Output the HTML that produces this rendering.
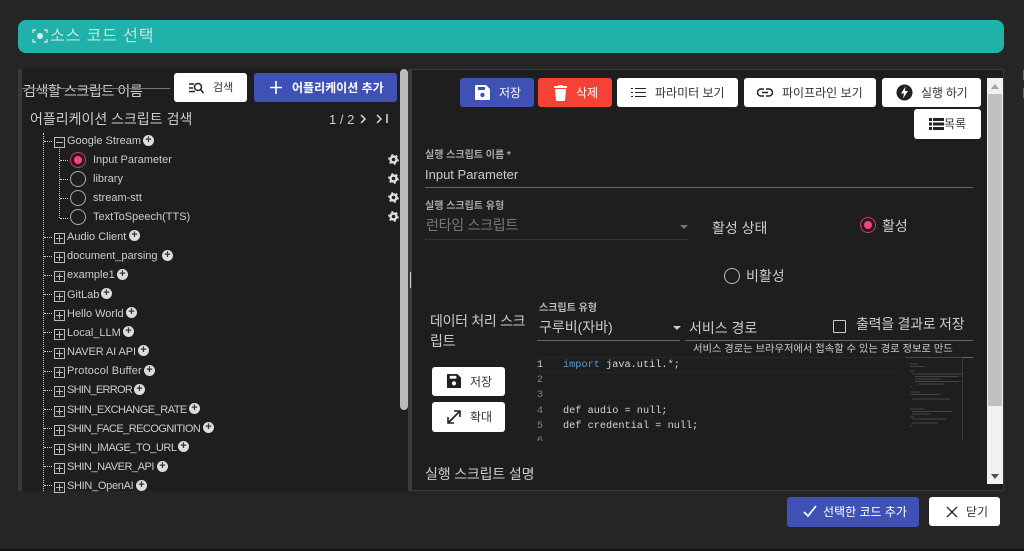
<!DOCTYPE html>
<html lang="ko"><head><meta charset="utf-8"><style>
html,body{margin:0;padding:0;width:1024px;height:551px;overflow:hidden;background:#252525}
body{font-family:"Liberation Sans","Noto Sans CJK KR",sans-serif;color:#ddd;position:relative}
.a{position:absolute;white-space:nowrap}
.btn{position:absolute;border-radius:3px;background:#fff;color:#333;font-size:12px;height:29px;line-height:30px;box-sizing:border-box;white-space:nowrap}
.btn svg{position:absolute}
.btn span{position:absolute;top:0}
.blue{background:#3f51b5;color:#fff}
.red{background:#f44336;color:#fff}
.t{position:absolute;font-size:11px;color:#ccc;line-height:14px;white-space:nowrap;margin-top:1px}
.s{letter-spacing:-.45px}
.box{position:absolute;left:54px;width:9px;height:9px;border:1px solid #bbb;margin-top:1px}
.box:before{content:"";position:absolute;left:1px;top:4px;width:7px;height:1px;background:#bbb}
.box.p:after{content:"";position:absolute;left:4px;top:1px;width:1px;height:7px;background:#bbb}
.d{position:absolute;left:44px;width:8px;border-top:1px dotted #ccc}
.c{position:absolute;width:11px;height:11px;border-radius:50%;background:#ddd;color:#334;font-size:11px;line-height:10px;text-align:center;font-weight:bold}
.r{position:absolute;left:70px;width:14px;height:14px;border:1px solid #aaa;border-radius:50%}
.g{position:absolute;left:388px}
.m{font-family:"Liberation Mono","DejaVu Sans Mono",monospace;font-size:10.25px;position:absolute;white-space:pre;color:#d4d4d4;line-height:14px}
.n{font-family:"Liberation Mono",monospace;font-size:10.25px;position:absolute;left:517px;width:26px;text-align:right;color:#858585;line-height:14px}
</style></head><body>
<div class="a" style="left:0;top:549px;width:1024px;height:2px;background:#141414"></div>
<div class="a" style="left:1023px;top:70px;width:1px;height:10px;background:#666"></div>
<div class="a" style="left:1023px;top:88px;width:1px;height:10px;background:#666"></div>
<div class="a" style="left:18px;top:20px;width:986px;height:33px;background:#20b2aa;border-radius:8px"></div>
<svg class="a" style="left:32px;top:28px" width="16" height="16" viewBox="0 0 16 16" fill="none" stroke="#cdd" stroke-width="1.4"><path d="M1 5V2h3M12 2h3v3M15 11v3h-3M4 14H1v-3"/><circle cx="8" cy="8" r="3" fill="#dee" stroke="none"/></svg>
<div class="a" style="left:50px;top:27px;font-size:16px;line-height:20px;color:#c4e2df;letter-spacing:.9px">소스 코드 선택</div>

<div class="a" style="left:18px;top:69px;width:392px;height:422px;background:#1e1e1e"></div>
<div class="a" style="left:18px;top:69px;width:4px;height:422px;background:#3a3a3a"></div>
<div class="a" style="left:408px;top:69px;width:4px;height:422px;background:#3a3a3a"></div>
<div class="a" style="left:400px;top:69px;width:8px;height:341px;background:#bbb;border-radius:4px"></div>
<div class="a" style="left:410px;top:272px;width:4px;height:16px;border-left:1px solid #ccc;border-right:1px solid #ccc;box-sizing:border-box"></div>

<div class="a" style="left:23px;top:82px;font-size:14px;line-height:18px;color:#ccc;letter-spacing:-.4px">검색할 스크립트 이름</div>
<div class="a" style="left:22px;top:88px;width:148px;height:1px;background:#777"></div>
<div class="btn" style="left:174px;top:73px;width:73px"><svg style="left:14px;top:7px" width="17" height="15" viewBox="0 0 17 15" fill="none" stroke="#222" stroke-width="1.5"><path d="M1 4h5M1 8h4M1 11.500h6"/><circle cx="10" cy="7" r="3.500"/><path d="M12.500 9.500L15.500 13"/></svg><span style="left:39px;font-size:11px">검색</span></div>
<div class="btn blue" style="left:254px;top:73px;width:143px"><svg style="left:16px;top:8px" width="12" height="13" viewBox="0 0 12 13" stroke="#fff" stroke-width="1.600"><path d="M6 0v13M0 6.500h12"/></svg><span style="left:38px;font-weight:bold">어플리케이션 추가</span></div>
<div class="a" style="left:30px;top:110px;font-size:14px;line-height:18px;color:#ccc">어플리케이션 스크립트 검색</div>
<div class="a" style="left:329px;top:111px;font-size:13px;line-height:18px;color:#ccc">1 / 2</div>
<svg class="a" style="left:358px;top:112px" width="32" height="14" viewBox="0 0 32 14" fill="none" stroke="#ddd" stroke-width="1.500"><path d="M3 3l4 4-4 4M19 3l4 4-4 4M29 2v9"/></svg>

<div class="a" style="left:43px;top:133px;height:358px;border-left:1px dotted #ccc"></div>
<div class="a" style="left:59px;top:147px;height:71px;border-left:1px dotted #ccc"></div>

<div class="d" style="top:141px"></div><div class="box" style="top:136px"></div><div class="t" style="left:67px;top:133px">Google Stream</div><div class="c" style="left:143px;top:135px">+</div>

<div class="d" style="left:60px;top:160px"></div>
<div class="a" style="left:70px;top:152px;width:14px;height:14px;border:1px solid #e03070;border-radius:50%"><div class="a" style="left:3px;top:3px;width:8px;height:8px;border-radius:50%;background:#ff4081"></div></div><div class="t" style="left:93px;top:152px">Input Parameter</div>
<div class="d" style="left:60px;top:179px"></div><div class="r" style="top:171px"></div><div class="t" style="left:93px;top:171px">library</div>
<div class="d" style="left:60px;top:198px"></div><div class="r" style="top:190px"></div><div class="t" style="left:93px;top:190px">stream-stt</div>
<div class="d" style="left:60px;top:218px"></div><div class="r" style="top:209px"></div><div class="t" style="left:93px;top:209px">TextToSpeech(TTS)</div>
<svg class="g" style="top:154px" width="11" height="11" viewBox="0 0 11 11" fill="none" stroke="#ddd"><circle cx="5.500" cy="5.500" r="3" stroke-width="2.400"/><circle cx="5.500" cy="5.500" r="4.700" stroke-width="1.400" stroke-dasharray="2 2.900"/></svg>
<svg class="g" style="top:173px" width="11" height="11" viewBox="0 0 11 11" fill="none" stroke="#ddd"><circle cx="5.500" cy="5.500" r="3" stroke-width="2.400"/><circle cx="5.500" cy="5.500" r="4.700" stroke-width="1.400" stroke-dasharray="2 2.900"/></svg>
<svg class="g" style="top:192px" width="11" height="11" viewBox="0 0 11 11" fill="none" stroke="#ddd"><circle cx="5.500" cy="5.500" r="3" stroke-width="2.400"/><circle cx="5.500" cy="5.500" r="4.700" stroke-width="1.400" stroke-dasharray="2 2.900"/></svg>
<svg class="g" style="top:211px" width="11" height="11" viewBox="0 0 11 11" fill="none" stroke="#ddd"><circle cx="5.500" cy="5.500" r="3" stroke-width="2.400"/><circle cx="5.500" cy="5.500" r="4.700" stroke-width="1.400" stroke-dasharray="2 2.900"/></svg>

<div class="d" style="top:237px"></div><div class="box p" style="top:232px"></div><div class="t" style="left:67px;top:229px">Audio Client</div><div class="c" style="left:129px;top:230px">+</div>
<div class="d" style="top:256px"></div><div class="box p" style="top:251px"></div><div class="t" style="left:67px;top:248px">document_parsing</div><div class="c" style="left:162px;top:250px">+</div>
<div class="d" style="top:275px"></div><div class="box p" style="top:270px"></div><div class="t" style="left:67px;top:267px">example1</div><div class="c" style="left:117px;top:269px">+</div>
<div class="d" style="top:294px"></div><div class="box p" style="top:290px"></div><div class="t" style="left:67px;top:287px">GitLab</div><div class="c" style="left:101px;top:288px">+</div>
<div class="d" style="top:313px"></div><div class="box p" style="top:309px"></div><div class="t" style="left:67px;top:306px">Hello World</div><div class="c" style="left:126px;top:307px">+</div>
<div class="d" style="top:332px"></div><div class="box p" style="top:328px"></div><div class="t" style="left:67px;top:325px">Local_LLM</div><div class="c" style="left:123px;top:326px">+</div>
<div class="d" style="top:351px"></div><div class="box p" style="top:347px"></div><div class="t" style="left:67px;top:344px;letter-spacing:-.1px">NAVER AI API</div><div class="c" style="left:138px;top:345px">+</div>
<div class="d" style="top:371px"></div><div class="box p" style="top:366px"></div><div class="t" style="left:67px;top:363px;letter-spacing:.15px">Protocol Buffer</div><div class="c" style="left:144px;top:365px">+</div>
<div class="d" style="top:390px"></div><div class="box p" style="top:385px"></div><div class="t s" style="left:67px;top:382px;letter-spacing:-.7px">SHIN_ERROR</div><div class="c" style="left:134px;top:384px">+</div>
<div class="d" style="top:409px"></div><div class="box p" style="top:405px"></div><div class="t s" style="left:67px;top:402px;letter-spacing:-.5px">SHIN_EXCHANGE_RATE</div><div class="c" style="left:189px;top:403px">+</div>
<div class="d" style="top:428px"></div><div class="box p" style="top:424px"></div><div class="t s" style="left:67px;top:421px;letter-spacing:-.55px">SHIN_FACE_RECOGNITION</div><div class="c" style="left:203px;top:422px">+</div>
<div class="d" style="top:447px"></div><div class="box p" style="top:443px"></div><div class="t s" style="left:67px;top:440px">SHIN_IMAGE_TO_URL</div><div class="c" style="left:178px;top:441px">+</div>
<div class="d" style="top:466px"></div><div class="box p" style="top:462px"></div><div class="t s" style="left:67px;top:459px">SHIN_NAVER_API</div><div class="c" style="left:157px;top:461px">+</div>
<div class="d" style="top:485px"></div><div class="box p" style="top:481px"></div><div class="t" style="left:67px;top:478px;letter-spacing:-.3px">SHIN_OpenAI</div><div class="c" style="left:136px;top:480px">+</div>

<div class="a" style="left:412px;top:69px;width:592px;height:422px;background:#1e1e1e;border:1px solid #3a3a3a;border-left:0;box-sizing:border-box"></div>
<div class="a" style="left:987px;top:78px;width:16px;height:406px;background:#f1f1f1"></div>
<div class="a" style="left:988px;top:94px;width:14px;height:312px;background:#c1c1c1"></div>
<div class="a" style="left:991px;top:84px;border:4px solid transparent;border-bottom:5px solid #a3a3a3;border-top:0"></div>
<div class="a" style="left:991px;top:474px;border:4px solid transparent;border-top:5px solid #505050;border-bottom:0"></div>

<div class="btn blue" style="left:460px;top:78px;width:74px"><svg style="left:14px;top:6px" width="17" height="17" viewBox="0 0 17 17"><path d="M2 1h10l4 4v10a1 1 0 0 1-1 1H2a1 1 0 0 1-1-1V2a1 1 0 0 1 1-1z" fill="#fff"/><rect x="4" y="3" width="7" height="3" fill="#3f51b5"/><circle cx="8.500" cy="11" r="2.200" fill="#3f51b5"/></svg><span style="left:39px">저장</span></div>
<div class="btn red" style="left:538px;top:78px;width:74px"><svg style="left:14px;top:6px" width="17" height="17" viewBox="0 0 17 17" fill="#fff"><path d="M3 5h11l-1 11a1 1 0 0 1-1 1H5a1 1 0 0 1-1-1zM2 2h4l1-1h3l1 1h4v2H2z"/></svg><span style="left:38px">삭제</span></div>
<div class="btn" style="left:617px;top:78px;width:121px"><svg style="left:14px;top:9px" width="15" height="11" viewBox="0 0 15 11" stroke="#222" stroke-width="1.100"><path d="M0 1.500h2M4 1.500h11M0 5.500h2M4 5.500h11M0 9.500h2M4 9.500h11"/></svg><span style="left:38px">파라미터 보기</span></div>
<div class="btn" style="left:744px;top:78px;width:132px"><svg style="left:13px;top:9px" width="16" height="11" viewBox="0 0 16 11" fill="none" stroke="#222" stroke-width="1.500"><path d="M7 2H4a3.500 3.500 0 0 0 0 7h3M9 2h3a3.500 3.500 0 0 1 0 7H9M5 5.500h6"/></svg><span style="left:38px">파이프라인 보기</span></div>
<div class="btn" style="left:882px;top:78px;width:99px"><svg style="left:13px;top:5px" width="19" height="19" viewBox="0 0 19 19"><circle cx="9.500" cy="9.500" r="8" fill="#222"/><path d="M10.500 3.500L6 10.500h3l-1 5 5-7.500h-3z" fill="#fff"/></svg><span style="left:39px;letter-spacing:-.2px">실행 하기</span></div>
<div class="btn" style="left:914px;top:109px;width:67px;height:30px;line-height:30px"><svg style="left:15px;top:9px" width="15" height="12" viewBox="0 0 15 12" fill="#222"><path d="M0 0h3v3H0zM4 0h11v3H4zM0 4.500h3v3H0zM4 4.500h11v3H4zM0 9h3v3H0zM4 9h11v3H4z"/></svg><span style="left:30px">목록</span></div>

<div class="a" style="left:425px;top:149px;font-size:10px;line-height:13px;color:#aaa;font-weight:bold">실행 스크립트 이름 *</div>
<div class="a" style="left:425px;top:166px;font-size:13px;line-height:17px;color:#ccc">Input Parameter</div>
<div class="a" style="left:425px;top:187px;width:548px;height:1px;background:#666"></div>

<div class="a" style="left:425px;top:200px;font-size:10px;line-height:13px;color:#aaa;font-weight:bold">실행 스크립트 유형</div>
<div class="a" style="left:426px;top:216px;font-size:14px;line-height:18px;color:#777;letter-spacing:-.25px">런타임 스크립트</div>
<div class="a" style="left:680px;top:225px;border:4px solid transparent;border-top:4px solid #777;border-bottom:0"></div>
<div class="a" style="left:425px;top:239px;width:262px;border-top:1px dotted #444"></div>
<div class="a" style="left:712px;top:219px;font-size:14px;line-height:18px;color:#ccc">활성 상태</div>
<div class="a" style="left:860px;top:217px;width:14px;height:14px;border:1px solid #e03070;border-radius:50%"><div class="a" style="left:3px;top:3px;width:8px;height:8px;border-radius:50%;background:#ff4081"></div></div>
<div class="a" style="left:882px;top:217px;font-size:14px;line-height:18px;color:#ccc">활성</div>
<div class="a" style="left:724px;top:268px;width:14px;height:14px;border:1px solid #bbb;border-radius:50%"></div>
<div class="a" style="left:746px;top:267px;font-size:14px;line-height:18px;color:#ccc">비활성</div>

<div class="a" style="left:430px;top:311px;width:100px;font-size:14px;line-height:20px;color:#ccc;white-space:normal;letter-spacing:-.3px">데이터 처리 스크립트</div>
<div class="a" style="left:539px;top:302px;font-size:10px;line-height:13px;color:#bbb;font-weight:bold">스크립트 유형</div>
<div class="a" style="left:539px;top:318px;font-size:14px;line-height:18px;color:#ccc">구루비(자바)</div>
<div class="a" style="left:673px;top:326px;border:4px solid transparent;border-top:4px solid #ccc;border-bottom:0"></div>
<div class="a" style="left:537px;top:340px;width:143px;height:1px;background:#666"></div>
<div class="a" style="left:689px;top:319px;font-size:14px;line-height:18px;color:#ccc">서비스 경로</div>
<div class="a" style="left:685px;top:340px;width:288px;height:1px;background:#666"></div>
<div class="a" style="left:833px;top:320px;width:11px;height:11px;border:1px solid #ccc;border-radius:1px"></div>
<div class="a" style="left:856px;top:316px;font-size:14px;line-height:17px;color:#ccc;letter-spacing:-.25px">출력을 결과로 저장</div>
<div class="a" style="left:693px;top:343px;font-size:10.3px;line-height:14px;color:#ccc">서비스 경로는 브라우저에서 접속할 수 있는 경로 정보로 만드</div>

<div class="a" style="left:540px;top:357px;width:423px;height:84px;background:#1e1e1e"></div>
<div class="a" style="left:540px;top:357px;width:360px;height:14px;border:1px solid #282828;border-right:0"></div>
<div class="a" style="left:944px;top:357px;width:29px;height:1px;background:#666"></div>
<div class="n" style="top:358px;color:#c6c6c6">1</div><div class="n" style="top:373px">2</div><div class="n" style="top:388px">3</div><div class="n" style="top:404px">4</div><div class="n" style="top:419px">5</div><div class="n" style="top:434px;height:7px;overflow:hidden">6</div>
<div class="m" style="left:563px;top:358px"><span style="color:#569cd6">import</span> java.util.*;</div>
<div class="m" style="left:563px;top:404px">def audio = null;</div>
<div class="m" style="left:563px;top:419px">def credential = null;</div>

<svg class="a" style="left:906px;top:357px" width="60" height="84" viewBox="0 0 60 84">
<path d="M0 .5h56" stroke="#264f78" stroke-width="1"/>
<path d="M56.500 0v84" stroke="#3a3a3a"/>
<g stroke="#444" stroke-width="1"><path d="M4 7h8M4 9.500h14M4 14h4M6 17h50M9 19.500h44M9 22h26M9 24.500h46M12 27h26M4 29.500h2M4 35h10M4 37.500h30M6 42h38M4 52h14M6 54.500h40M6 57h18M4 60h4M6 62h34M6 66h26M4 69h2"/></g></svg>

<div class="btn" style="left:432px;top:367px;width:73px"><svg style="left:14px;top:6px" width="16" height="16" viewBox="0 0 17 17"><path d="M2 1h10l4 4v10a1 1 0 0 1-1 1H2a1 1 0 0 1-1-1V2a1 1 0 0 1 1-1z" fill="#222"/><rect x="4" y="3" width="7" height="3" fill="#fff"/><circle cx="8.500" cy="11" r="2.200" fill="#fff"/></svg><span style="left:38px">저장</span></div>
<div class="btn" style="left:432px;top:402px;width:73px;height:30px"><svg style="left:14px;top:7px" width="16" height="16" viewBox="0 0 16 16" fill="none" stroke="#222" stroke-width="1.600"><path d="M2 14L14 2M8 2h6v6M2 8v6h6"/></svg><span style="left:38px">확대</span></div>
<div class="a" style="left:425px;top:465px;font-size:14px;line-height:18px;color:#ccc;letter-spacing:-.15px">실행 스크립트 설명</div>

<div class="btn blue" style="left:787px;top:497px;width:132px;height:30px"><svg style="left:16px;top:8px" width="14" height="13" viewBox="0 0 14 13" fill="none" stroke="#fff" stroke-width="1.700"><path d="M1 7l4 4 8-10"/></svg><span style="left:36px">선택한 코드 추가</span></div>
<div class="btn" style="left:929px;top:497px;width:71px"><svg style="left:17px;top:9px" width="12" height="12" viewBox="0 0 12 12" stroke="#222" stroke-width="1.300"><path d="M1 1l10 10M11 1L1 11"/></svg><span style="left:37px">닫기</span></div>
</body></html>
